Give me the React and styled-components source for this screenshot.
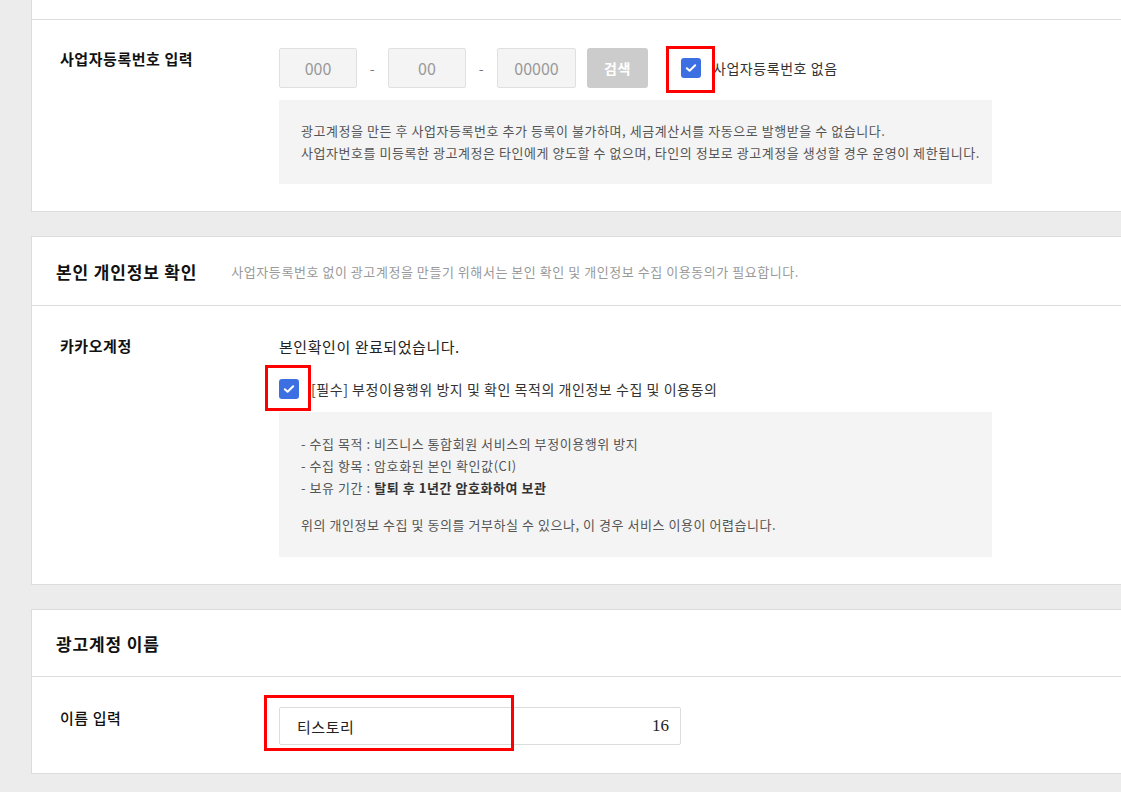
import React from 'react';
import styled, { createGlobalStyle } from 'styled-components';

const Global = createGlobalStyle`
  html, body {
    margin: 0;
    padding: 0;
    background: #ececec;
    overflow: hidden;
  }
  * {
    box-sizing: border-box;
    -webkit-font-smoothing: antialiased;
  }
  body {
    font-family: 'Noto Sans CJK KR', 'Noto Sans', sans-serif;
    color: #333;
    letter-spacing: 0.55px;
  }
`

const Page = styled.div`
  width: 1121px;
  height: 792px;
  padding-left: 31px;
  display: flex;
  flex-direction: column;
  gap: 24px;
`

const Card = styled.section`
  width: 1100px;
  background: #fff;
  border: 1px solid #dcdcdc;
  border-right: none;
  border-top: ${p => (p.cut ? 'none' : '1px solid #dcdcdc')};
`

const TopStub = styled.div`
  height: 20px;
  border-bottom: 1px solid #dcdcdc;
`

const Header = styled.div`
  height: ${p => p.h || 69}px;
  padding-left: 24px;
  display: flex;
  align-items: center;
  gap: 34px;
  border-bottom: 1px solid #dcdcdc;

  h3 {
    margin: 0;
    font-size: 17px;
    font-weight: 700;
    letter-spacing: 0.85px;
    color: #111;
  }
  span {
    font-size: 13px;
    color: #999;
  }
`

const Row = styled.div`
  display: grid;
  grid-template-columns: 219px 1fr;
  padding: ${p => p.pad || '28px 0 28px 28px'};
`

const Label = styled.div`
  font-size: 15px;
  font-weight: ${p => (p.light ? 500 : 700)};
  color: #111;
  line-height: 22px;
`

const Field = styled.div`
  display: flex;
  flex-direction: column;
`

const Line = styled.div`
  display: flex;
  align-items: center;
`

const NumBox = styled.div`
  width: ${p => p.w}px;
  height: 40px;
  background: #f4f4f4;
  border: 1px solid #e0e0e0;
  border-radius: 2px;
  display: flex;
  align-items: center;
  justify-content: center;
  font-size: 16px;
  letter-spacing: 0;
  color: #999;
`

const Dash = styled.span`
  width: 31px;
  text-align: center;
  font-size: 14px;
  color: #777;
`

const SearchBtn = styled.button`
  margin-left: 11px;
  width: 61px;
  height: 40px;
  border: none;
  border-radius: 3px;
  background: #cccccc;
  color: #fff;
  font-family: inherit;
  font-size: 14px;
  font-weight: 700;
  letter-spacing: 0.5px;
`

const Check = styled.label`
  position: relative;
  display: flex;
  align-items: center;
  gap: 12px;
  margin-top: ${p => p.mt || 0}px;
  margin-left: ${p => p.ml || 0}px;
  font-size: 14px;
  color: #333;
`

const Box = styled.span`
  width: 20px;
  height: 20px;
  border-radius: 3px;
  background: #3c6fe2;
  display: flex;
  align-items: center;
  justify-content: center;
`

const RedMark = styled.span`
  position: absolute;
  left: ${p => p.l}px;
  top: ${p => p.t}px;
  width: ${p => p.w}px;
  height: ${p => p.h}px;
  border: 3px solid #ff0000;
  pointer-events: none;
`

const Notice = styled.div`
  width: 713px;
  margin-top: ${p => p.mt}px;
  padding: ${p => p.pad};
  background: #f4f4f4;
  font-size: 13px;
  line-height: 22px;
  color: #555;

  p {
    margin: 0;
    white-space: nowrap;
  }
  b {
    color: #333;
  }
  p + p.gap {
    margin-top: 15px;
  }
`

const Done = styled.div`
  font-size: 15px;
  line-height: 22px;
  color: #222;
  margin-top: 1px;
`

const NameWrap = styled.div`
  position: relative;
  width: 402px;
`

const NameInput = styled.div`
  height: 38px;
  border: 1px solid #dcdcdc;
  border-radius: 2px;
  display: flex;
  align-items: center;
  justify-content: space-between;
  padding: 0 11px 0 17px;
  font-size: 15px;
  color: #222;

  em {
    font-style: normal;
    font-family: 'Liberation Serif', serif;
    font-size: 17px;
    letter-spacing: 0;
    color: #222;
  }
`

const Tick = () => (
  <svg width="12" height="10" viewBox="0 0 12 10" fill="none">
    <path d="M1.8 5.2 L4.6 7.8 L10.2 2.2" stroke="#fff" strokeWidth="2" strokeLinecap="round" strokeLinejoin="round" />
  </svg>
)

export default function App() {
  return (
    <Page>
      <Global />
      <Card cut>
        <TopStub />
        <Row pad="28px 0 27px 28px">
          <Label>사업자등록번호 입력</Label>
          <Field>
            <Line>
              <NumBox w={78}>000</NumBox>
              <Dash>-</Dash>
              <NumBox w={78}>00</NumBox>
              <Dash>-</Dash>
              <NumBox w={79}>00000</NumBox>
              <SearchBtn>검색</SearchBtn>
              <Check ml={33}>
                <Box><Tick /></Box>
                사업자등록번호 없음
                <RedMark l={-15} t={-12} w={49} h={47} />
              </Check>
            </Line>
            <Notice mt={12} pad="20px 22px">
              <p>광고계정을 만든 후 사업자등록번호 추가 등록이 불가하며, 세금계산서를 자동으로 발행받을 수 없습니다.</p>
              <p>사업자번호를 미등록한 광고계정은 타인에게 양도할 수 없으며, 타인의 정보로 광고계정을 생성할 경우 운영이 제한됩니다.</p>
            </Notice>
          </Field>
        </Row>
      </Card>

      <Card>
        <Header>
          <h3>본인 개인정보 확인</h3>
          <span>사업자등록번호 없이 광고계정을 만들기 위해서는 본인 확인 및 개인정보 수집 이용동의가 필요합니다.</span>
        </Header>
        <Row pad="29px 0 27px 28px">
          <Label>카카오계정</Label>
          <Field>
            <Done>본인확인이 완료되었습니다.</Done>
            <Check mt={21}>
              <Box><Tick /></Box>
              [필수] 부정이용행위 방지 및 확인 목적의 개인정보 수집 및 이용동의
              <RedMark l={-14} t={-14} w={46} h={46} />
            </Check>
            <Notice mt={13} pad="21px 22px 21px 22px">
              <p>- 수집 목적 : 비즈니스 통합회원 서비스의 부정이용행위 방지</p>
              <p>- 수집 항목 : 암호화된 본인 확인값(CI)</p>
              <p>- 보유 기간 : <b>탈퇴 후 1년간 암호화하여 보관</b></p>
              <p className="gap">위의 개인정보 수집 및 동의를 거부하실 수 있으나, 이 경우 서비스 이용이 어렵습니다.</p>
            </Notice>
          </Field>
        </Row>
      </Card>

      <Card>
        <Header h={67}>
          <h3>광고계정 이름</h3>
        </Header>
        <Row pad="30px 0 28px 28px">
          <Label light>이름 입력</Label>
          <NameWrap>
            <NameInput>
              <span>티스토리</span>
              <em>16</em>
            </NameInput>
            <RedMark l={-15} t={-12} w={250} h={56} />
          </NameWrap>
        </Row>
      </Card>
    </Page>
  );
}
